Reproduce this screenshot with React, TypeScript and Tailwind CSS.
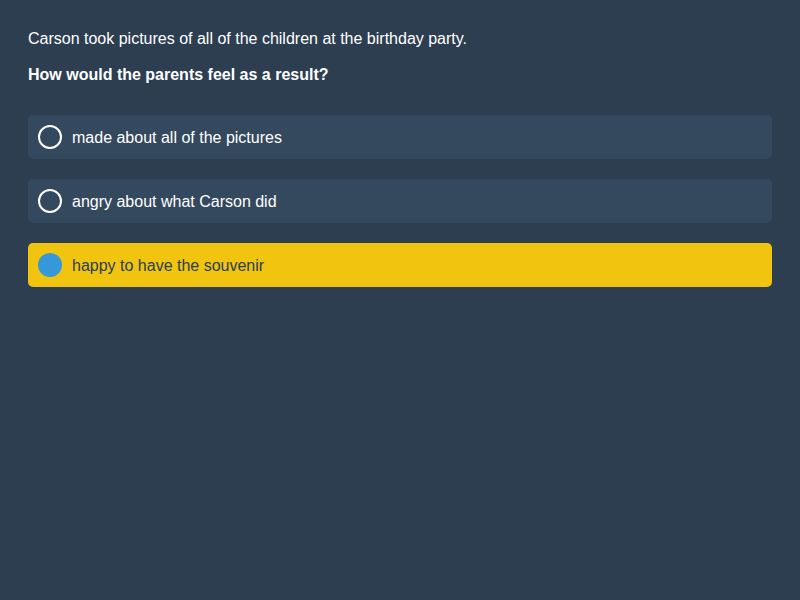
import React, { useState } from 'react';

const OPTIONS = [
  'made about all of the pictures',
  'angry about what Carson did',
  'happy to have the souvenir',
];

export default function App() {
  const [selected, setSelected] = useState(2);

  return (
    <div className="min-h-[600px] w-full bg-[#2c3e50] px-7 pt-[30px] font-['Liberation_Sans',Arial,sans-serif] text-[16px] leading-[18px] text-white">
      <p>Carson took pictures of all of the children at the birthday party.</p>
      <p className="mt-[18px] font-bold">How would the parents feel as a result?</p>

      <div className="mt-[31px] flex flex-col gap-5">
        {OPTIONS.map((text, i) => {
          const isSelected = i === selected;
          return (
            <button
              key={text}
              type="button"
              onClick={() => setSelected(i)}
              className={`flex h-11 w-full items-center gap-2.5 rounded-[5px] px-2.5 text-left ${
                isSelected ? 'bg-[#f1c40f] text-[#2c3e50]' : 'bg-[#34495e] text-white'
              }`}
            >
              {isSelected ? (
                <span className="h-6 w-6 flex-shrink-0 rounded-full bg-[#3498db]" />
              ) : (
                <span className="h-6 w-6 flex-shrink-0 rounded-full border-2 border-white" />
              )}
              <span className="pt-0.5">{text}</span>
            </button>
          );
        })}
      </div>
    </div>
  );
}
